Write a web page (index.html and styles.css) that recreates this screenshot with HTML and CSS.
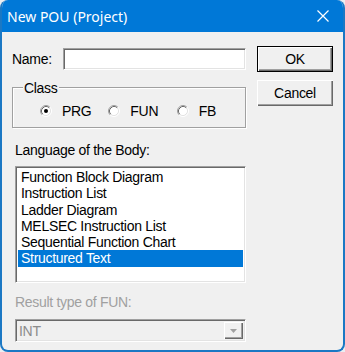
FILE: index.html
```html
<!DOCTYPE html>
<html>
<head>
<meta charset="utf-8">
<link rel="stylesheet" href="styles.css">
</head>
<body>
<div class="window">
  <div class="titlebar">
    <span class="title">New POU (Project)</span>
    <svg class="close" width="12" height="12" viewBox="0 0 12 12"><path d="M0.5 0.5 L11.5 11.5 M11.5 0.5 L0.5 11.5" stroke="#fff" stroke-width="1.2" fill="none"/></svg>
  </div>
  <div class="body">
    <div class="main">
      <div class="name-row">
        <span class="label">Name:</span>
        <div class="field sunken"></div>
      </div>
      <div class="group">
        <span class="group-title">Class</span>
        <div class="radios">
          <div class="radio-item">
            <svg class="radio" width="12" height="12" viewBox="0 0 12 12">
              <circle cx="6" cy="6" r="4.5" fill="#fff"/>
              <path d="M2.11 9.89 A5.5 5.5 0 0 1 9.89 2.11" stroke="#a0a0a0" fill="none"/>
              <path d="M9.89 2.11 A5.5 5.5 0 0 1 2.11 9.89" stroke="#fff" fill="none"/>
              <path d="M2.82 9.18 A4.5 4.5 0 0 1 9.18 2.82" stroke="#696969" fill="none"/>
              <path d="M9.18 2.82 A4.5 4.5 0 0 1 2.82 9.18" stroke="#e3e3e3" fill="none"/>
              <circle cx="6" cy="6" r="2" fill="#000"/>
            </svg>
            <span>PRG</span>
          </div>
          <div class="radio-item">
            <svg class="radio" width="12" height="12" viewBox="0 0 12 12">
              <circle cx="6" cy="6" r="4.5" fill="#fff"/>
              <path d="M2.11 9.89 A5.5 5.5 0 0 1 9.89 2.11" stroke="#a0a0a0" fill="none"/>
              <path d="M9.89 2.11 A5.5 5.5 0 0 1 2.11 9.89" stroke="#fff" fill="none"/>
              <path d="M2.82 9.18 A4.5 4.5 0 0 1 9.18 2.82" stroke="#696969" fill="none"/>
              <path d="M9.18 2.82 A4.5 4.5 0 0 1 2.82 9.18" stroke="#e3e3e3" fill="none"/>
            </svg>
            <span>FUN</span>
          </div>
          <div class="radio-item">
            <svg class="radio" width="12" height="12" viewBox="0 0 12 12">
              <circle cx="6" cy="6" r="4.5" fill="#fff"/>
              <path d="M2.11 9.89 A5.5 5.5 0 0 1 9.89 2.11" stroke="#a0a0a0" fill="none"/>
              <path d="M9.89 2.11 A5.5 5.5 0 0 1 2.11 9.89" stroke="#fff" fill="none"/>
              <path d="M2.82 9.18 A4.5 4.5 0 0 1 9.18 2.82" stroke="#696969" fill="none"/>
              <path d="M9.18 2.82 A4.5 4.5 0 0 1 2.82 9.18" stroke="#e3e3e3" fill="none"/>
            </svg>
            <span>FB</span>
          </div>
        </div>
      </div>
      <div class="lang-label">Language of the Body:</div>
      <div class="listbox sunken">
        <div class="item">Function Block Diagram</div>
        <div class="item">Instruction List</div>
        <div class="item">Ladder Diagram</div>
        <div class="item">MELSEC Instruction List</div>
        <div class="item">Sequential Function Chart</div>
        <div class="item selected">Structured Text</div>
      </div>
      <div class="result-label">Result type of FUN:</div>
      <div class="combo sunken">
        <span class="combo-text">INT</span>
        <div class="drop-btn">
          <svg width="7" height="4" viewBox="0 0 7 4"><path d="M0 0 H7 L3.5 4 Z" fill="#a0a0a0"/></svg>
        </div>
      </div>
    </div>
    <div class="buttons">
      <div class="btn default">OK</div>
      <div class="btn">Cancel</div>
    </div>
  </div>
</div>
</body>
</html>
```
FILE: styles.css
```css
html, body {
  margin: 0;
  padding: 0;
  background: #eceef1;
}
.window {
  width: 345px;
  height: 352px;
  box-sizing: border-box;
  border: 2px solid #1b78c4;
  border-top: 0;
  border-radius: 8px;
  overflow: hidden;
  background: #f0f0f0;
  font-family: "Liberation Sans", Arial, sans-serif;
  font-size: 14px;
  letter-spacing: -0.3px;
  color: #000;
}
.titlebar {
  height: 32px;
  margin: 0 -2px;
  background: #0078d7;
  display: flex;
  align-items: center;
  justify-content: space-between;
  padding: 0 16px 0 7px;
  box-sizing: border-box;
}
.title {
  font-family: "Noto Sans", "Open Sans", sans-serif;
  font-size: 14px;
  letter-spacing: 0;
  color: #fff;
  margin-top: 1px;
}
.close {
  display: block;
}
.body {
  display: flex;
  padding: 14px 0 0 10px;
  gap: 11px;
}
.main {
  width: 234px;
  padding-top: 2px;
  display: flex;
  flex-direction: column;
  align-items: flex-start;
}
.sunken {
  box-sizing: border-box;
  border: 1px solid;
  border-color: #a0a0a0 #fff #fff #a0a0a0;
  box-shadow: inset 1px 1px #696969, inset -1px -1px #e3e3e3;
}
.name-row {
  display: flex;
  align-items: center;
  height: 22px;
  width: 100%;
  line-height: 16px;
}
.label {
  margin-left: 0;
}
.field {
  margin-left: auto;
  width: 183px;
  height: 22px;
  background: #fff;
}
.group {
  position: relative;
  margin-top: 17px;
  width: 234px;
  height: 41px;
  box-sizing: border-box;
  border: 1px solid #a0a0a0;
  box-shadow: inset 1px 1px #fff, 1px 1px #fff;
  padding: 15px 0 0 27px;
}
.group-title {
  position: absolute;
  top: -8px;
  left: 10px;
  padding: 0 1px;
  background: #f0f0f0;
  line-height: 16px;
}
.radios {
  display: flex;
  height: 16px;
  line-height: 16px;
}
.radio-item {
  width: 70px;
  display: flex;
  align-items: center;
  gap: 10px;
}
.radio {
  display: block;
  flex: none;
}
.lang-label {
  margin-top: 14px;
  margin-left: 3px;
  line-height: 16px;
}
.listbox {
  margin-top: 8px;
  margin-left: 3px;
  width: 231px;
  height: 117px;
  background: #fff;
  padding: 2px 2px 0 2px;
}
.item {
  line-height: 16.3px;
  height: 16.3px;
  padding-left: 3px;
  white-space: nowrap;
}
.item.selected {
  background: #0078d7;
  color: #fff;
}
.result-label {
  margin-top: 11px;
  margin-left: 3px;
  line-height: 16px;
  color: #a0a0a0;
}
.combo {
  margin-top: 9px;
  margin-left: 3px;
  width: 231px;
  height: 23px;
  background: #f0f0f0;
  display: flex;
  align-items: center;
  justify-content: space-between;
  padding: 2px 2px 2px 3px;
}
.combo-text {
  color: #8c8c8c;
  line-height: 16px;
}
.drop-btn {
  width: 19px;
  height: 17px;
  box-sizing: border-box;
  display: flex;
  align-items: center;
  justify-content: center;
  background: #f0f0f0;
  box-shadow: inset 1px 1px #fff, inset -1px -1px #696969, inset -2px -2px #a0a0a0;
}
.drop-btn svg {
  display: block;
}
.buttons {
  width: 76px;
  display: flex;
  flex-direction: column;
  gap: 8px;
}
.btn {
  height: 26px;
  box-sizing: border-box;
  display: flex;
  align-items: center;
  justify-content: center;
  background: #f0f0f0;
  box-shadow: inset 1px 1px #fff, inset -1px -1px #696969, inset -2px -2px #a0a0a0;
}
.btn.default {
  border: 1px solid #000;
  box-shadow: inset 1px 1px #fff, inset -1px -1px #696969, inset -2px -2px #a0a0a0;
}
```
